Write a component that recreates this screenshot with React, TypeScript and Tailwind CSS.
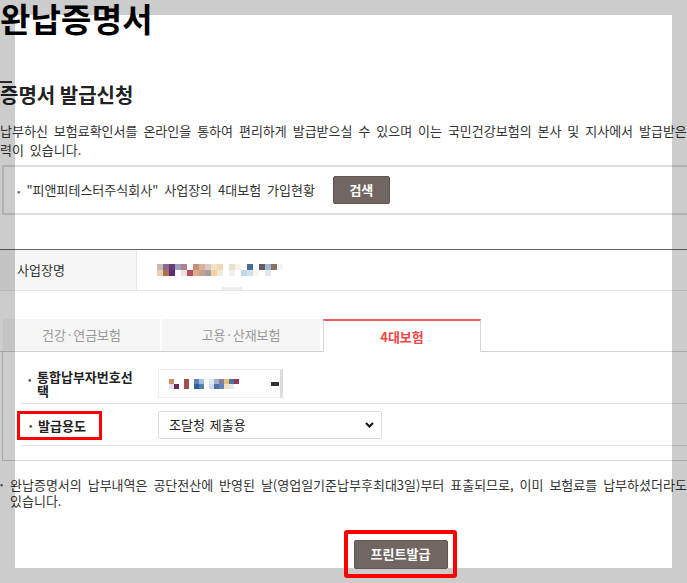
const NAME_TOP = ['#c8b8b0', '#8a6a8a', '#6b3a7a', '#9aa0c0', '#b08090', '#ffffff', '#c89070', '#d8b0a0', '#e0c8c0', '#f0e0d0', '#f0d8b0', '#ffffff', '#e8e0d0', '#f8f0e0', '#ffffff', '#4a6a9a', '#ffffff', '#606060', '#a0b8d0', '#8a7060', '#f4f4f8']
const NAME_BOTTOM = ['#e8d0b0', '#b07050', '#5a3070', '#ffffff', '#f0e0e0', '#b05060', '#e0a890', '#c8a090', '#a0a0a0', '#f8d0a0', '#f0e8d8', '#ffffff', '#f0f0f0', '#ffffff', '#c0d8e8', '#d0e0f0', '#f8f8f0', '#ffffff', '#e0e8f0', '#ffffff', '#ffffff']
const NO_TOP = ['#c89060', '#ffffff', '#ffffff', '#a05050', '#ffffff', '#6080b0', '#a0c0e0', '#ffffff', '#e0e8f0', '#a0b0d0', '#808090', '#e0c080', '#5070a0', '#8a3a5a']
const NO_BOTTOM = ['#e0e0f0', '#6a3050', '#ffffff', '#a05050', '#ffffff', '#3060a0', '#5080b0', '#ffffff', '#d0d8f0', '#5070a0', '#6080c0', '#f0e0c0', '#e0e8f8', '#ffffff']

// blurred (pixelated) values in the screenshot
function Mosaic({ top, bottom, size }: { top: string[]; bottom: string[]; size: number }) {
  return (
    <div className="flex flex-col">
      {[top, bottom].map((row, r) => (
        <div key={r} className="flex">
          {row.map((c, i) => (
            <div key={i} style={{ background: c, width: size, height: size }} />
          ))}
        </div>
      ))}
    </div>
  )
}

export default function App() {
  return (
    <div className="relative w-[687px] h-[583px] overflow-hidden bg-white font-['Noto_Sans_CJK_KR','Noto_Sans',sans-serif] text-[#333]">
      <div className="w-[800px]">
        {/* Page title */}
        <h1 className="text-[33px] leading-[36px] font-bold text-black tracking-[0.2px]">완납증명서</h1>

        {/* Section title */}
        <div className="mt-[45px] h-[2px] w-[12px] bg-[#333]" />
        <h2 className="text-[20px] leading-[24px] font-bold text-[#222]">증명서 발급신청</h2>
        <p className="mt-[14px] text-[13px] leading-[19px] [word-spacing:3px] whitespace-nowrap">
          납부하신 보험료확인서를 온라인을 통하여 편리하게 발급받으실 수 있으며 이는 국민건강보험의 본사 및 지사에서 발급받은 것과 동일한 효
          <br />
          력이 있습니다.
        </p>

        {/* Company search */}
        <div className="mt-[6px] ml-[2px] h-[50px] border-2 border-[#dedede] flex items-center pl-[13px]">
          <span className="text-[10px] text-[#666] mr-[6px]">•</span>
          <span className="text-[13px] [word-spacing:3px]">"피앤피테스터주식회사" 사업장의 4대보험 가입현황</span>
          <button className="ml-[18px] w-[57px] h-[28px] bg-[#716661] border border-[#62574f] rounded-[2px] text-white text-[13px] font-bold">
            검색
          </button>
        </div>

        {/* Company name table */}
        <div className="mt-[34px] border-t border-[#666]">
          <div className="flex h-[41px] border-b border-[#e6e6e6]">
            <div className="w-[137px] bg-[#f6f6f6] border-r border-[#e6e6e6] pl-[17px] flex items-center text-[13px]">
              사업장명
            </div>
            <div className="flex flex-col pl-[20px]">
              <div className="mt-[14px]">
                <Mosaic top={NAME_TOP} bottom={NAME_BOTTOM} size={6} />
              </div>
              <div className="mt-auto ml-[65px] h-[3px] w-[20px] bg-[#eee]" />
            </div>
          </div>
        </div>

        {/* Tabs */}
        <div className="mt-[28px] flex h-[33px] border-b border-[#d0d0d0] pl-[3px] text-[13px]">
          <div className="w-[157px] h-[32px] bg-[#f5f5f5] flex items-center justify-center text-[#999]">건강·연금보험</div>
          <div className="ml-[2px] w-[158px] h-[32px] bg-[#f5f5f5] flex items-center justify-center text-[#999]">고용·산재보험</div>
          <div className="ml-[3px] w-[158px] h-[33px] bg-white border-t-2 border-x border-t-[#f25a5a] border-x-[#d6d6d6] flex items-center justify-center text-[#f04848] font-bold">
            4대보험
          </div>
        </div>

        {/* Tab panel */}
        <div className="ml-[2px] h-[109px] border-l border-b border-[#d6d6d6]">
          <div className="ml-[18px] h-[52px] border-b border-[#e2e2e2] flex items-start pt-[17px]">
            <div className="w-[137px] flex pl-[7px] text-[13px] leading-[14px] font-bold text-[#222]">
              <span className="w-[9px] text-[9px] text-[#555] pt-[4px]">•</span>
              <span className="pt-[1px]">
                통합납부자번호선
                <br />
                택
              </span>
            </div>
            <div className="w-[125px] h-[29px] border border-[#eeeeee] border-r-[3px] border-r-[#dcdcdc] flex items-center pl-[10px]">
              <Mosaic top={NO_TOP} bottom={NO_BOTTOM} size={5} />
              <div className="ml-auto mr-[1px] w-[8px] h-[4px] bg-[#333]" />
            </div>
          </div>

          <div className="ml-[18px] h-[42px] border-b border-[#e2e2e2] flex items-start pt-[7px]">
            <div className="-ml-[4px] w-[141px]">
              <div className="w-[85px] h-[29px] border-[3px] border-[#ff0000] flex items-center pl-[9px] text-[13px] font-bold text-[#222]">
                <span className="w-[9px] text-[9px] text-[#555]">•</span>
                발급용도
              </div>
            </div>
            <div className="w-[224px] h-[28px] border border-[#dcdcdc] rounded-[2px] flex items-center pl-[10px] pr-[7px] text-[13px] text-[#222] [word-spacing:2px]">
              조달청 제출용
              <svg className="ml-auto" width="9" height="6" viewBox="0 0 9 6">
                <path d="M1 1l3.5 3.5L8 1" fill="none" stroke="#111" strokeWidth="2" />
              </svg>
            </div>
          </div>
        </div>

        {/* Note */}
        <div className="mt-[16px] flex text-[13px] leading-[16px] [word-spacing:3px] whitespace-nowrap">
          <span className="w-[10px] text-[9px] text-[#555]">•</span>
          <p>
            완납증명서의 납부내역은 공단전산에 반영된 날(영업일기준납부후최대3일)부터 표출되므로, 이미 보험료를 납부하셨더라도 조회되지 않을 수
            <br />
            있습니다.
          </p>
        </div>

        {/* Print */}
        <div className="relative z-10 mt-[21px] ml-[344px] w-[113px] h-[48px] border-4 border-[#ff0000] rounded-[3px] flex items-center justify-center">
          <button className="w-[94px] h-[29px] bg-[#716661] border border-[#62574f] rounded-[2px] text-white text-[13px] font-bold">
            프린트발급
          </button>
        </div>
      </div>

      {/* spotlight overlay */}
      <div className="pointer-events-none absolute left-[15px] top-[15px] w-[657px] h-[553px] shadow-[0_0_0_2000px_rgba(0,0,0,0.2)]" />
    </div>
  )
}
